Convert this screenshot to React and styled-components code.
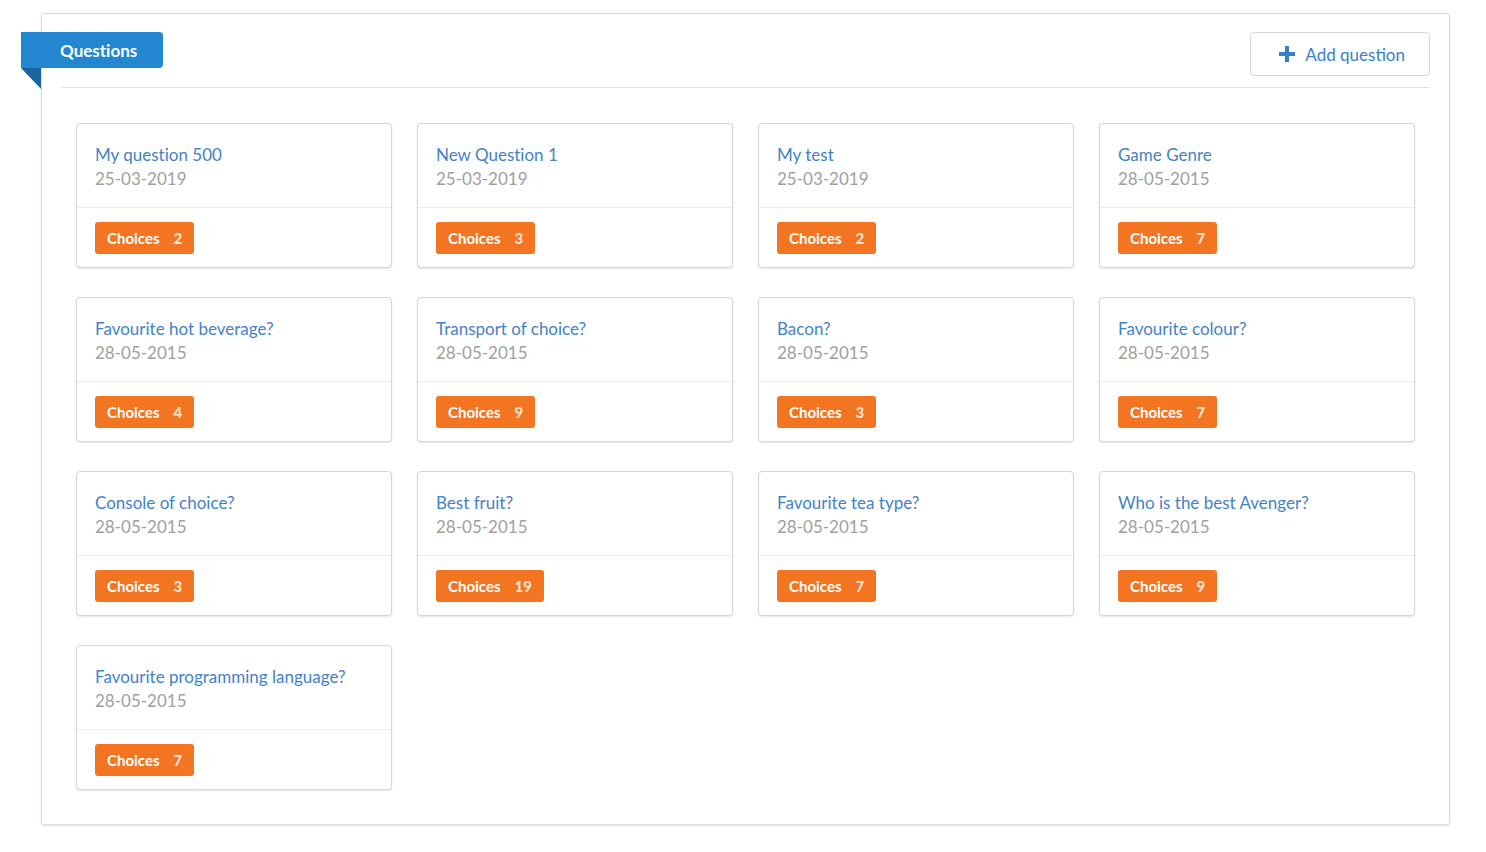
import React from 'react';
import styled, { createGlobalStyle } from 'styled-components';

const GlobalStyle = createGlobalStyle`
  body {
    margin: 0;
    background: #ffffff;
    font-family: Lato, "Open Sans", Arial, sans-serif;
    font-variant-ligatures: none;
  }
`;

// Styled Components
const Page = styled.div`
  padding: 13px 36px 28px 41px;
`;

const Panel = styled.section`
  position: relative;
  background: #fff;
  border: 1px solid #dcdcdc;
  border-radius: 3px;
  box-shadow: 0 1px 3px rgba(0, 0, 0, 0.12);
  padding: 18px 34px 34px 34px;
`;

const Header = styled.div`
  display: flex;
  justify-content: flex-end;
  align-items: center;
  margin: 0 -15px 0 -15px;
  padding-bottom: 11px;
  border-bottom: 1px solid #e3e3e3;
`;

const Ribbon = styled.div`
  position: absolute;
  left: -21px;
  top: 18px;
  height: 36px;
  width: 142px;
  background: #2286d0;
  border-radius: 0 4px 4px 0;
  color: #fff;
  font-weight: 700;
  font-size: 17px;
  line-height: 37px;
  padding-left: 39px;
  box-sizing: border-box;

  &::after {
    content: '';
    position: absolute;
    left: 0;
    top: 36px;
    border-top: 21px solid #1a65a0;
    border-left: 20px solid transparent;
  }
`;

const AddButton = styled.button`
  display: flex;
  align-items: center;
  gap: 10px;
  height: 44px;
  padding: 0 24px 0 28px;
  background: #fff;
  border: 1px solid #d8d8d8;
  border-radius: 4px;
  color: #3a7fc9;
  font-family: inherit;
  font-size: 17px;
  cursor: pointer;
`;

const Grid = styled.div`
  display: grid;
  grid-template-columns: repeat(4, 1fr);
  column-gap: 25px;
  row-gap: 29px;
  margin-top: 35px;
`;

const Card = styled.div`
  border: 1px solid #d6d6d6;
  border-radius: 4px;
  box-shadow: 0 1px 2px rgba(0, 0, 0, 0.1);
  background: #fff;
`;

const CardBody = styled.div`
  padding: 19px 18px 16px;
  border-bottom: 1px solid #ececec;
  font-size: 17px;
  line-height: 24px;
`;

const Title = styled.div`
  color: #4482c8;
`;

const Date = styled.div`
  color: #a0a0a0;
`;

const CardFooter = styled.div`
  padding: 14px 18px 13px;
`;

const Badge = styled.span`
  display: inline-flex;
  align-items: center;
  height: 32px;
  padding: 0 12px;
  gap: 14px;
  background: #f37421;
  border-radius: 3px;
  color: #fff;
  font-size: 15px;
  font-weight: 700;

  b {
    color: rgba(255, 255, 255, 0.8);
  }
`;

const questions = [
  ['My question 500', '25-03-2019', 2],
  ['New Question 1', '25-03-2019', 3],
  ['My test', '25-03-2019', 2],
  ['Game Genre', '28-05-2015', 7],
  ['Favourite hot beverage?', '28-05-2015', 4],
  ['Transport of choice?', '28-05-2015', 9],
  ['Bacon?', '28-05-2015', 3],
  ['Favourite colour?', '28-05-2015', 7],
  ['Console of choice?', '28-05-2015', 3],
  ['Best fruit?', '28-05-2015', 19],
  ['Favourite tea type?', '28-05-2015', 7],
  ['Who is the best Avenger?', '28-05-2015', 9],
  ['Favourite programming language?', '28-05-2015', 7],
];

const PlusIcon = () => (
  <svg width="16" height="16" viewBox="0 0 16 16">
    <path d="M6 0h4v6h6v4h-6v6H6v-6H0V6h6z" fill="#3a7fc9" />
  </svg>
);

export default function App() {
  return (
    <>
      <GlobalStyle />
      <Page>
        <Panel>
          <Ribbon>Questions</Ribbon>
          <Header>
            <AddButton>
              <PlusIcon />
              Add question
            </AddButton>
          </Header>
          <Grid>
            {questions.map(([title, date, count]) => (
              <Card key={title}>
                <CardBody>
                  <Title>{title}</Title>
                  <Date>{date}</Date>
                </CardBody>
                <CardFooter>
                  <Badge>
                    Choices <b>{count}</b>
                  </Badge>
                </CardFooter>
              </Card>
            ))}
          </Grid>
        </Panel>
      </Page>
    </>
  );
}
